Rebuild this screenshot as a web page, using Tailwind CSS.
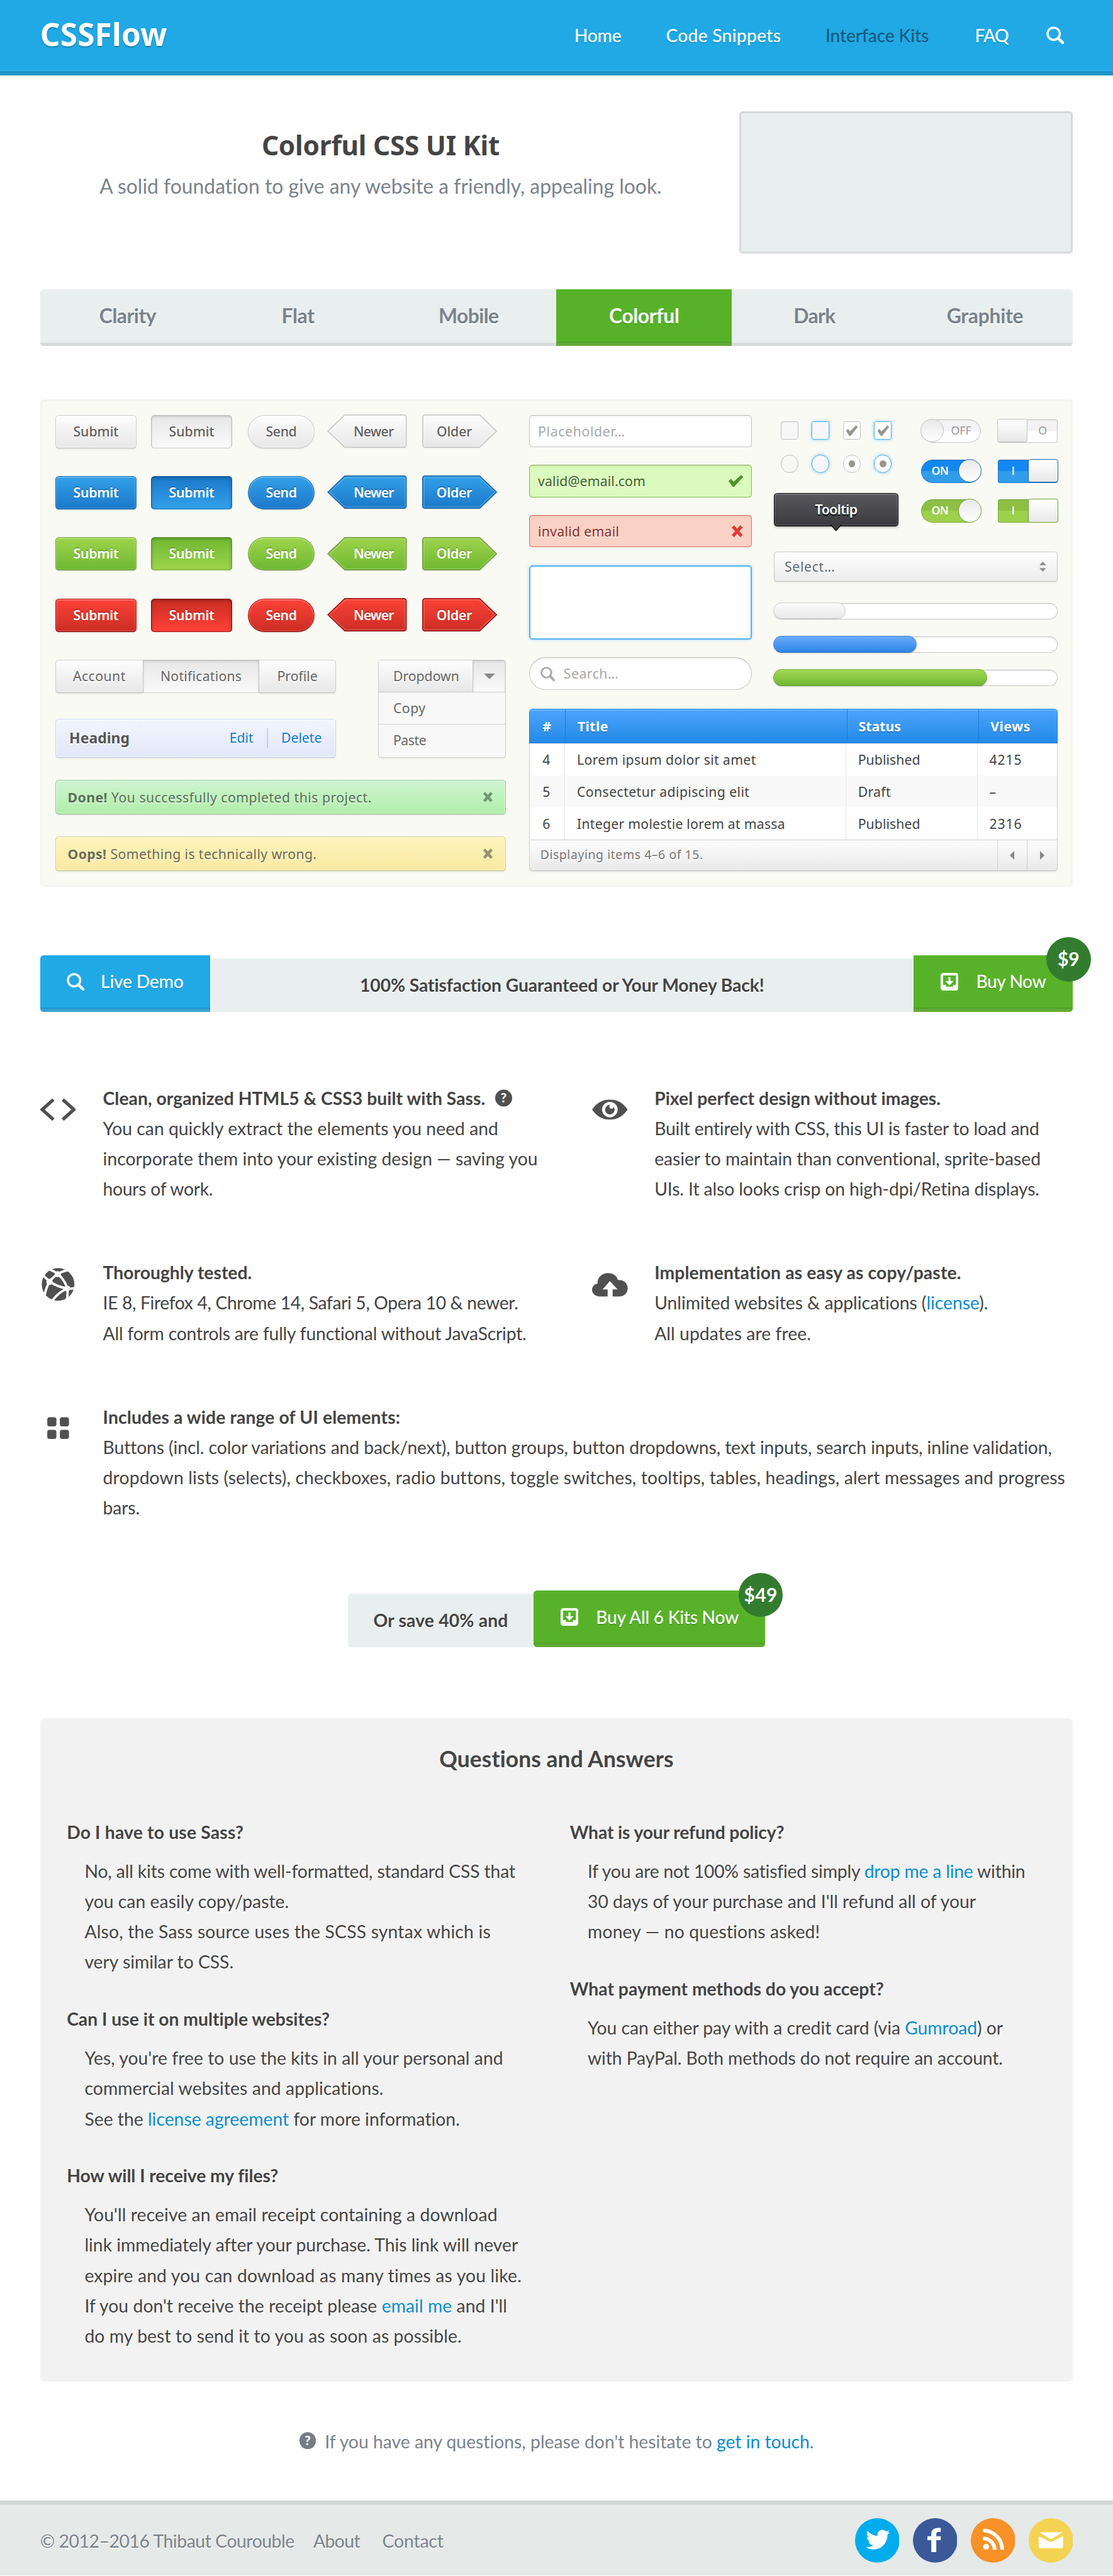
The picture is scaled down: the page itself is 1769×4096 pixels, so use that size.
<!DOCTYPE html>
<html lang="en">
<head>
<meta charset="utf-8">
<title>Colorful CSS UI Kit - CSSFlow</title>
<script src="https://cdn.jsdelivr.net/npm/@tailwindcss/browser@4"></script>
</head>
<body class="bg-white">
<svg class="absolute size-0">
  <defs>
    <linearGradient id="g-gray" x2="0" y2="1"><stop stop-color="#fdfdfd"/><stop offset="1" stop-color="#e7e7e7"/></linearGradient>
    <linearGradient id="g-blue" x2="0" y2="1"><stop stop-color="#33a0e9"/><stop offset="1" stop-color="#1b79ca"/></linearGradient>
    <linearGradient id="g-green" x2="0" y2="1"><stop stop-color="#9dd44b"/><stop offset="1" stop-color="#70b832"/></linearGradient>
    <linearGradient id="g-red" x2="0" y2="1"><stop stop-color="#fd4238"/><stop offset="1" stop-color="#cb2d24"/></linearGradient>
  </defs>
  <symbol id="newer" viewBox="0 0 72 32">
    <path d="M16 1.5H69a2 2 0 0 1 2 2V30.500H16z" fill="#000" stroke="none" opacity=".06"/>
    <path d="M15.800 .5H69a2 2 0 0 1 2 2V27.500a2 2 0 0 1-2 2H15.800L.7 15z"/>
    <path d="M16.300 1.500H69a1 1 0 0 1 1 1V27.500a1 1 0 0 1-1 1H16.300L2 15z" fill="none" stroke="#fff" opacity=".2"/>
  </symbol>
  <symbol id="older" viewBox="0 0 68 32">
    <path d="M1 1.500H52V30.500H1z" fill="#000" stroke="none" opacity=".06"/>
    <path d="M2.500 .5H51.700L66.800 15L51.700 29.500H2.500a2 2 0 0 1-2-2V2.500a2 2 0 0 1 2-2z"/>
    <path d="M2.500 1.500H51.200L65.500 15L51.200 28.500H2.500a1 1 0 0 1-1-1V2.500a1 1 0 0 1 1-1z" fill="none" stroke="#fff" opacity=".2"/>
  </symbol>
  <symbol id="cross" viewBox="0 0 10 10"><path d="M1.500 1L8.500 9M8.500 1L1.500 9" fill="none" stroke="currentColor" stroke-width="2.700"/></symbol>
  <symbol id="check" viewBox="0 0 14 11"><path d="M0.500 5.600L2.800 3.600L5 6.200L12 0.200L13.800 1.800L5.600 10.800L4.300 10.800Z" fill="currentColor"/></symbol>
  <symbol id="search" viewBox="0 0 16 16"><circle cx="6.600" cy="6.600" r="5.500" fill="none" stroke="currentColor" stroke-width="2"/><path d="M10.500 10.500L14.800 14.800" stroke="currentColor" stroke-width="2.600" stroke-linecap="round"/></symbol>
  <symbol id="download" viewBox="0 0 16 16"><rect x="1.100" y="1.100" width="13.800" height="13.800" rx="1.500" fill="none" stroke="currentColor" stroke-width="2.200"/><path d="M7.100 3.800H8.900V7.300H11.600L8 11.300L4.400 7.300H7.100z" fill="currentColor"/><path d="M2 10.800H4.800V12.500H11.200V10.800H14V14H2z" fill="currentColor"/></symbol>
</svg>

<div class="flex h-[2315px] w-[1000px] flex-col bg-white font-['Lato',sans-serif] text-[16px] leading-[27.2px] text-[#444] whitespace-nowrap [font-variant-ligatures:none] [zoom:1.769]">

  <header class="h-[69px] shrink-0 border-b border-[#f0f3f4]">
    <div class="flex h-[68px] items-start border-b-4 border-[#1a93cb] bg-[#20a9e5] px-9 text-white shadow-[inset_0_-1px_#30b0e9]">
      <div class="font-['Noto_Sans',sans-serif] text-[28px] leading-[62px] font-bold tracking-[.11px] [text-shadow:0_1px_1px_rgba(0,0,0,.25)]">CSSFlow</div>
      <nav class="ml-auto flex gap-10 leading-[64px] font-medium [text-shadow:0_1px_rgba(0,0,0,.12)]">
        <a class="tracking-[-.1px]">Home</a>
        <a class="tracking-[.13px]">Code Snippets</a>
        <a class="mr-[1.500px] tracking-[-.1px] text-[#135b7d] [text-shadow:none]">Interface Kits</a>
        <a class="tracking-[-.5px]">FAQ</a>
      </nav>
      <svg class="mt-6 mr-2 ml-[34px] size-4 shrink-0"><use href="#search"/></svg>
    </div>
  </header>

  <main class="shrink-0 px-9 pt-[31px]">
    <section class="flex">
      <div class="w-[612px] pt-3 text-center">
        <h1 class="font-['Noto_Sans',sans-serif] text-2xl leading-[37px] font-bold tracking-[-.16px]">Colorful CSS UI Kit</h1>
        <p class="mt-[5px] text-lg leading-7 tracking-[.01px] text-[#7a838b]">A solid foundation to give any website a friendly, appealing look.</p>
      </div>
      <div class="ml-4 h-32 w-[300px] rounded-[3px] border-2 border-[#d6dada] bg-[#e8efee]"></div>
    </section>

    <nav class="mt-8 flex h-[51px] overflow-hidden rounded-[3px] text-center text-lg leading-[48.500px] font-bold">
      <a class="w-[157.500px] border-b-3 border-[#d6dad9] bg-[#e8efee] tracking-[-.28px] text-[#7a838b] [text-shadow:0_1px_#fff]">Clarity</a>
      <a class="w-[148.500px] border-b-3 border-[#d6dad9] bg-[#e8efee] tracking-[-.18px] text-[#7a838b] [text-shadow:0_1px_#fff]">Flat</a>
      <a class="w-[158px] border-b-3 border-[#d6dad9] bg-[#e8efee] tracking-[-.32px] text-[#7a838b] [text-shadow:0_1px_#fff]">Mobile</a>
      <a class="w-[157.500px] border-b-3 border-[#62ab37] bg-[#58b229] tracking-[-.2px] text-white shadow-[inset_0_-1px_#4f9f2a] [text-shadow:0_1px_rgba(0,0,0,.15)]">Colorful</a>
      <a class="w-[148.500px] border-b-3 border-[#d6dad9] bg-[#e8efee] tracking-[-.33px] text-[#7a838b] [text-shadow:0_1px_#fff]">Dark</a>
      <a class="w-[158px] border-b-3 border-[#d6dad9] bg-[#e8efee] tracking-[-.13px] text-[#7a838b] [text-shadow:0_1px_#fff]">Graphite</a>
    </nav>

    <section class="mt-12 flex h-[438px] justify-between rounded-[3px] border-2 border-[#f4f5ee] bg-[#f9faf4] px-3 pt-[12.300px] pb-3 font-['Noto_Sans',sans-serif] text-xs text-[#666]">

      <!-- Buttons, groups, dropdown, alerts -->
      <div class="w-[405px]">
        <div class="flex h-[30px] text-center leading-[28px] font-medium text-[#616161] [text-shadow:0_1px_#fff]">
          <a class="w-[73px] rounded-[3px] border border-[#cfcfcf] border-b-[#c2c2c2] bg-linear-to-b from-[#fdfdfd] to-[#e7e7e7] shadow-[0_1px_1px_rgba(0,0,0,.07),inset_0_0_0_1px_rgba(255,255,255,.3)]">Submit</a>
          <a class="ml-[13px] w-[73px] rounded-[3px] border border-[#bdbdbd] border-b-[#d2d2d2] bg-linear-to-b from-[#e7e7e7] to-[#fafafa] shadow-[inset_0_1px_2px_rgba(0,0,0,.16)]">Submit</a>
          <a class="ml-[14px] w-[60px] rounded-full border border-[#cfcfcf] border-b-[#c2c2c2] bg-linear-to-b from-[#fdfdfd] to-[#e7e7e7] tracking-[-.19px] shadow-[0_1px_1px_rgba(0,0,0,.07),inset_0_0_0_1px_rgba(255,255,255,.3)]">Send</a>
          <a class="relative ml-3 w-[71px] border border-transparent pl-[11px] tracking-[-.32px]"><svg class="absolute -top-px -left-px h-8 w-[72px]" fill="url(#g-gray)" stroke="#c9c9c9"><use href="#newer"/></svg><span class="relative">Newer</span></a>
          <a class="relative ml-[14px] w-[67px] border border-transparent pr-[10px] tracking-[-.05px]"><svg class="absolute -top-px -left-px h-8 w-[68px]" fill="url(#g-gray)" stroke="#c9c9c9"><use href="#older"/></svg><span class="relative">Older</span></a>
        </div>
        <div class="mt-[25px] flex h-[30px] text-center leading-[28px] font-semibold tracking-[-.14px] text-white [text-shadow:0_-1px_rgba(0,0,0,.25)]">
          <a class="w-[73px] rounded-[3px] border border-[#1a74bd] border-b-[#12599a] bg-linear-to-b from-[#33a0e9] to-[#1b79ca] shadow-[0_1px_1px_rgba(0,0,0,.07),inset_0_0_0_1px_rgba(255,255,255,.1),inset_0_1px_rgba(255,255,255,.2)]">Submit</a>
          <a class="ml-[13px] w-[73px] rounded-[3px] border border-[#145a98] border-b-[#1f78c4] bg-linear-to-b from-[#1b79ca] to-[#33a0e9] shadow-[inset_0_1px_3px_rgba(0,0,0,.25)]">Submit</a>
          <a class="ml-[14px] w-[60px] rounded-full border border-[#1a74bd] border-b-[#12599a] bg-linear-to-b from-[#33a0e9] to-[#1b79ca] tracking-[-.27px] shadow-[0_1px_1px_rgba(0,0,0,.07),inset_0_0_0_1px_rgba(255,255,255,.1),inset_0_1px_rgba(255,255,255,.2)]">Send</a>
          <a class="relative ml-3 w-[71px] border border-transparent pl-[11px] tracking-[-.5px]"><svg class="absolute -top-px -left-px h-8 w-[72px]" fill="url(#g-blue)" stroke="#1767ac"><use href="#newer"/></svg><span class="relative">Newer</span></a>
          <a class="relative ml-[14px] w-[67px] border border-transparent pr-[10px]"><svg class="absolute -top-px -left-px h-8 w-[68px]" fill="url(#g-blue)" stroke="#1767ac"><use href="#older"/></svg><span class="relative">Older</span></a>
        </div>
        <div class="mt-[25px] flex h-[30px] text-center leading-[28px] font-semibold tracking-[-.14px] text-white [text-shadow:0_-1px_rgba(0,0,0,.2)]">
          <a class="w-[73px] rounded-[3px] border border-[#7aad41] border-b-[#668f38] bg-linear-to-b from-[#9dd44b] to-[#70b832] shadow-[0_1px_1px_rgba(0,0,0,.07),inset_0_0_0_1px_rgba(255,255,255,.1),inset_0_1px_rgba(255,255,255,.2)]">Submit</a>
          <a class="ml-[13px] w-[73px] rounded-[3px] border border-[#638f34] border-b-[#7eb246] bg-linear-to-b from-[#70b832] to-[#9dd44b] shadow-[inset_0_1px_3px_rgba(0,0,0,.25)]">Submit</a>
          <a class="ml-[14px] w-[60px] rounded-full border border-[#7aad41] border-b-[#668f38] bg-linear-to-b from-[#9dd44b] to-[#70b832] tracking-[-.27px] shadow-[0_1px_1px_rgba(0,0,0,.07),inset_0_0_0_1px_rgba(255,255,255,.1),inset_0_1px_rgba(255,255,255,.2)]">Send</a>
          <a class="relative ml-3 w-[71px] border border-transparent pl-[11px] tracking-[-.5px]"><svg class="absolute -top-px -left-px h-8 w-[72px]" fill="url(#g-green)" stroke="#709f3c"><use href="#newer"/></svg><span class="relative">Newer</span></a>
          <a class="relative ml-[14px] w-[67px] border border-transparent pr-[10px]"><svg class="absolute -top-px -left-px h-8 w-[68px]" fill="url(#g-green)" stroke="#709f3c"><use href="#older"/></svg><span class="relative">Older</span></a>
        </div>
        <div class="mt-[25px] flex h-[30px] text-center leading-[28px] font-semibold tracking-[-.14px] text-white [text-shadow:0_-1px_rgba(0,0,0,.25)]">
          <a class="w-[73px] rounded-[3px] border border-[#b01613] border-b-[#860e0b] bg-linear-to-b from-[#fd4238] to-[#cb2d24] shadow-[0_1px_1px_rgba(0,0,0,.07),inset_0_0_0_1px_rgba(255,255,255,.1),inset_0_1px_rgba(255,255,255,.2)]">Submit</a>
          <a class="ml-[13px] w-[73px] rounded-[3px] border border-[#7e0d0b] border-b-[#ad1a16] bg-linear-to-b from-[#cb2d24] to-[#fd4238] shadow-[inset_0_1px_3px_rgba(0,0,0,.3)]">Submit</a>
          <a class="ml-[14px] w-[60px] rounded-full border border-[#b01613] border-b-[#860e0b] bg-linear-to-b from-[#fd4238] to-[#cb2d24] tracking-[-.27px] shadow-[0_1px_1px_rgba(0,0,0,.07),inset_0_0_0_1px_rgba(255,255,255,.1),inset_0_1px_rgba(255,255,255,.2)]">Send</a>
          <a class="relative ml-3 w-[71px] border border-transparent pl-[11px] tracking-[-.5px]"><svg class="absolute -top-px -left-px h-8 w-[72px]" fill="url(#g-red)" stroke="#9c1210"><use href="#newer"/></svg><span class="relative">Newer</span></a>
          <a class="relative ml-[14px] w-[67px] border border-transparent pr-[10px]"><svg class="absolute -top-px -left-px h-8 w-[68px]" fill="url(#g-red)" stroke="#9c1210"><use href="#older"/></svg><span class="relative">Older</span></a>
        </div>

        <div class="mt-[25px] flex h-[88px] justify-between">
          <div class="w-[252px]">
            <div class="flex h-[30px] text-center leading-[28px] [text-shadow:0_1px_#fff]">
              <a class="w-[78.500px] rounded-l-[3px] border border-r-0 border-[#cfcfcf] border-b-[#c2c2c2] bg-linear-to-b from-[#fdfdfd] to-[#e7e7e7] tracking-[.26px] shadow-[0_1px_1px_rgba(0,0,0,.07)]">Account</a>
              <a class="w-[105px] border border-[#c6c6c6] border-t-[#bdbdbd] border-b-[#d2d2d2] bg-linear-to-b from-[#e7e7e7] to-[#fafafa] tracking-[.13px] shadow-[inset_0_1px_2px_rgba(0,0,0,.12)]">Notifications</a>
              <a class="w-[68.500px] rounded-r-[3px] border border-l-0 border-[#cfcfcf] border-b-[#c2c2c2] bg-linear-to-b from-[#fdfdfd] to-[#e7e7e7] shadow-[0_1px_1px_rgba(0,0,0,.07)]">Profile</a>
            </div>
            <div class="mt-[23px] flex h-[35px] items-center rounded-[3px] border border-[#d0d8f0] border-b-[#bccbeb] bg-linear-to-b from-[#f2f6fe] to-[#e2e6f8] pr-3 pl-[12px] leading-[32px] text-[#0c7ccb] shadow-[0_1px_1px_rgba(0,0,0,.06),inset_0_0_0_1px_rgba(255,255,255,.25)] [text-shadow:0_1px_#fff]">
              <b class="text-[13px] text-[#555]">Heading</b>
              <a class="ml-auto">Edit</a>
              <i class="mx-3 h-[18px] w-px bg-[#c3cdeb]"></i>
              <a>Delete</a>
            </div>
          </div>
          <div class="h-[88px] w-[115px] rounded-[3px] border border-[#cacaca] bg-[#f8f8f8] leading-[28px] shadow-[0_1px_1px_rgba(0,0,0,.06)] [text-shadow:0_1px_#fff]">
            <div class="flex h-[29px] border-b border-[#cacaca]">
              <a class="w-[85px] rounded-tl-[2px] border-r border-[#c6c6c6] bg-linear-to-b from-[#fdfdfd] to-[#e7e7e7] pl-[13px]">Dropdown</a>
              <a class="flex grow items-center justify-center bg-linear-to-b from-[#e7e7e7] to-[#fafafa] shadow-[inset_0_1px_2px_rgba(0,0,0,.14)]"><svg class="h-[5px] w-[10px]" viewBox="0 0 10 5"><path d="M0 0H10L5 5z" fill="#888"/></svg></a>
            </div>
            <a class="block h-[29px] border-b border-[#cfcfcf] pl-[13px] tracking-[.3px]">Copy</a>
            <a class="block pl-[13px] tracking-[-.25px]">Paste</a>
          </div>
        </div>

        <div class="mt-5 flex h-[31px] items-center justify-between rounded-[3px] border border-[#93cf98] border-b-[#86bb8b] bg-linear-to-b from-[#cef4d0] to-[#b1eeaa] pr-[11px] pl-[10.500px] leading-[30px] text-[#577056] shadow-[0_1px_1px_rgba(0,0,0,.06),inset_0_0_0_1px_rgba(255,255,255,.25)] [text-shadow:0_1px_rgba(255,255,255,.6)]">
          <span class="tracking-[.27px]"><b>Done!</b> You successfully completed this project.</span>
          <svg class="size-[9.500px] text-[#6f9770]"><use href="#cross"/></svg>
        </div>
        <div class="mt-5 flex h-[31px] items-center justify-between rounded-[3px] border border-[#d9ce88] border-b-[#c9bf7f] bg-linear-to-b from-[#fdf4bd] to-[#fae9a2] pr-[11px] pl-[10.500px] leading-[30px] text-[#6f6a53] shadow-[0_1px_1px_rgba(0,0,0,.06),inset_0_0_0_1px_rgba(255,255,255,.25)] [text-shadow:0_1px_rgba(255,255,255,.6)]">
          <span class="tracking-[.22px]"><b>Oops!</b> Something is technically wrong.</span>
          <svg class="size-[9.500px] text-[#949071]"><use href="#cross"/></svg>
        </div>
      </div>

      <div class="w-[475px]">
        <div class="flex h-[247px] justify-between">
          <!-- Inputs -->
          <div class="flex w-[200px] flex-col gap-4 leading-[28px]">
            <div class="h-[29px] rounded-[3px] border border-[#c6c6c6] border-t-[#b9b9b9] bg-white pl-[7.500px] tracking-[.36px] text-[#a9a9a9] shadow-[inset_0_1px_2px_rgba(0,0,0,.06)]">Placeholder…</div>
            <div class="flex h-[29px] items-center rounded-[3px] border border-[#8abb50] border-t-[#7fae49] bg-[#dbfabd] pr-[6.500px] pl-[7.500px] tracking-[.07px] text-[#3f6228] shadow-[inset_0_1px_2px_rgba(0,0,0,.08)] [text-shadow:0_1px_rgba(255,255,255,.6)]">valid@email.com<svg class="ml-auto h-[11px] w-[14px] text-[#4f922c]"><use href="#check"/></svg></div>
            <div class="flex h-[29px] items-center rounded-[3px] border border-[#e5735d] border-t-[#dd5f4b] bg-[#fad2c5] pr-[7px] pl-[7.500px] tracking-[.16px] text-[#88302a] shadow-[inset_0_1px_2px_rgba(0,0,0,.08)] [text-shadow:0_1px_rgba(255,255,255,.6)]">invalid email<svg class="ml-auto size-[11px] text-[#dd3c38]"><use href="#cross"/></svg></div>
            <div class="h-[67px] rounded-[3px] border-[1.500px] border-[#4fb1f5] bg-white shadow-[0_0_3px_rgba(79,177,245,.5)]"></div>
            <div class="flex h-[29px] items-center rounded-full border border-[#c6c6c6] border-t-[#b9b9b9] bg-white pl-[9.500px] text-[#a9a9a9] shadow-[inset_0_1px_2px_rgba(0,0,0,.06)]"><svg class="size-[13px]"><use href="#search"/></svg><span class="ml-2 tracking-[.29px]">Search…</span></div>
          </div>

          <!-- Checks, toggles, select, progress -->
          <div class="w-[255px]">
            <div class="flex h-[100px] justify-between">
              <div class="w-[112px] pt-1.5">
                <div class="flex gap-3 pl-1.5">
                  <i class="size-4 rounded-[2px] border border-[#bdbdbd] bg-[#f7f7f7]"></i>
                  <i class="size-4 rounded-[2px] border border-[#4fb1f5] bg-[#f7f7f9] shadow-[0_0_3px_rgba(79,177,245,.7)]"></i>
                  <i class="flex size-4 items-center justify-center rounded-[2px] border border-[#bdbdbd] bg-white text-[#989591]"><svg class="h-[10px] w-[11px]" viewBox="0 0 14 11" preserveAspectRatio="none"><use href="#check" width="14" height="11"/></svg></i>
                  <i class="flex size-4 items-center justify-center rounded-[2px] border border-[#4fb1f5] bg-white text-[#989591] shadow-[0_0_3px_rgba(79,177,245,.7)]"><svg class="h-[10px] w-[11px]" viewBox="0 0 14 11" preserveAspectRatio="none"><use href="#check" width="14" height="11"/></svg></i>
                </div>
                <div class="mt-3.5 flex gap-3 pl-1.5">
                  <i class="size-4 rounded-full border border-[#bdbdbd] bg-[#f7f7f7]"></i>
                  <i class="size-4 rounded-full border border-[#4fb1f5] bg-[#f7f7f9] shadow-[0_0_3px_rgba(79,177,245,.7)]"></i>
                  <i class="flex size-4 items-center justify-center rounded-full border border-[#bdbdbd] bg-white"><b class="size-1.5 rounded-full bg-[#989591]"></b></i>
                  <i class="flex size-4 items-center justify-center rounded-full border border-[#4fb1f5] bg-white shadow-[0_0_3px_rgba(79,177,245,.7)]"><b class="size-1.5 rounded-full bg-[#989591]"></b></i>
                </div>
                <div class="relative mt-[18px] h-[30px] rounded-[3px] border border-[#1a1a1c] border-b-black bg-linear-to-b from-[#59595e] to-[#3a3a3e] text-center leading-[28px] font-semibold tracking-[-.3px] text-white shadow-[0_1px_2px_rgba(0,0,0,.25),inset_0_0_0_1px_rgba(255,255,255,.08),inset_0_1px_rgba(255,255,255,.1)] [text-shadow:0_1px_#000]">Tooltip
                  <svg class="absolute top-[28px] left-[50px] h-[6px] w-[11px]" viewBox="0 0 11 6"><path d="M.5 0L5.500 5.500L10.500 0" fill="#3e3e42" stroke="#111" stroke-width=".8"/></svg>
                </div>
              </div>
              <div class="grid h-[97px] w-[123px] grid-cols-[54px_54px] gap-[15px] pt-1 text-[10px] leading-[19px]">
                <div class="flex h-[21px] items-start rounded-full border border-[#c4c4c4] border-t-[#b9b9b9] bg-[linear-gradient(#f3f3f5_50%,#fff_50%)] text-[#999]"><i class="-mt-px -ml-px size-[21px] rounded-full border border-[#c2c2c2] bg-linear-to-b from-[#e8e8e8] to-white"></i><span class="ml-[6.500px]">OFF</span></div>
                <div class="flex h-[21px] items-start rounded-[2px] border border-[#c4c4c4] border-t-[#b9b9b9] bg-[linear-gradient(#f3f3f5_50%,#fff_50%)] text-[#999]"><i class="-mt-px -ml-px h-[21px] w-[27px] rounded-[2px] border border-[#c2c2c2] bg-linear-to-b from-white to-[#e8e8e8]"></i><span class="ml-2.5">O</span></div>
                <div class="flex h-[21px] items-start justify-between rounded-full border border-[#1b76c4] border-t-[#1863a4] bg-[linear-gradient(#1488f2_50%,#319de9_50%)] pl-[9px] font-semibold text-white"><span class="tracking-[-.3px]">ON</span><i class="-mt-px -mr-px size-[21px] rounded-full border border-[#1a65a8] bg-linear-to-b from-[#e8e8e8] to-white"></i></div>
                <div class="flex h-[21px] items-start justify-between rounded-[2px] border border-[#1b76c4] border-t-[#1863a4] bg-[linear-gradient(#1488f2_50%,#319de9_50%)] pl-[12px] font-semibold text-white"><span class="font-['Lato',sans-serif]">I</span><i class="-mt-px -mr-px h-[21px] w-[27px] rounded-[2px] border border-[#1a65a8] bg-linear-to-b from-white to-[#e8e8e8]"></i></div>
                <div class="flex h-[21px] items-start justify-between rounded-full border border-[#7cab3d] border-t-[#6c9a37] bg-[linear-gradient(#8dbf43_50%,#9dd04b_50%)] pl-[9px] font-semibold text-white"><span class="tracking-[-.3px]">ON</span><i class="-mt-px -mr-px size-[21px] rounded-full border border-[#6f9d3a] bg-linear-to-b from-[#e8e8e8] to-white"></i></div>
                <div class="flex h-[21px] items-start justify-between rounded-[2px] border border-[#7cab3d] border-t-[#6c9a37] bg-[linear-gradient(#8dbf43_50%,#9dd04b_50%)] pl-[12px] font-semibold text-white"><span class="font-['Lato',sans-serif]">I</span><i class="-mt-px -mr-px h-[21px] w-[27px] rounded-[2px] border border-[#6f9d3a] bg-linear-to-b from-white to-[#e8e8e8]"></i></div>
              </div>
            </div>
            <div class="mt-[23px] flex h-[27px] items-center rounded-[3px] border border-[#cacaca] border-b-[#c0c0c0] bg-linear-to-b from-[#fdfdfd] to-[#ececec] pr-2.5 pl-[9px] leading-[25px] tracking-[.39px] text-[#606b74] shadow-[0_1px_1px_rgba(0,0,0,.06)] [text-shadow:0_1px_#fff]">Select…<svg class="ml-auto h-[9px] w-1.5" viewBox="0 0 6 9"><path d="M0 3.200L3 0L6 3.200zM0 5.800H6L3 9z" fill="#8c8c8c"/></svg></div>
            <div class="mt-[19px] h-[15px] rounded-full border border-[#c6c6c6] border-t-[#b9b9b9] bg-white"><div class="-mt-px -ml-px h-[15px] w-[65px] rounded-full border border-[#cdcdcd] bg-linear-to-b from-[#fcfcfc] to-[#e8e8e8] shadow-[0_1px_1px_rgba(0,0,0,.06)]"></div></div>
            <div class="mt-[15px] h-[15px] rounded-full border border-[#c6c6c6] border-t-[#b9b9b9] bg-white"><div class="-mt-px -ml-px h-[15px] w-[129px] rounded-full border border-[#4f86c8] border-b-[#3b6db0] bg-linear-to-b from-[#67acfc] to-[#2c84e6] shadow-[0_1px_1px_rgba(0,0,0,.1)]"></div></div>
            <div class="mt-[15px] h-[15px] rounded-full border border-[#c6c6c6] border-t-[#b9b9b9] bg-white"><div class="-mt-px -ml-px h-[15px] w-[192px] rounded-full border border-[#7cab3d] border-b-[#6c9a37] bg-linear-to-b from-[#a3d855] to-[#70b832] shadow-[0_1px_1px_rgba(0,0,0,.1)]"></div></div>
          </div>
        </div>

        <!-- Table -->
        <div class="mt-[17px] h-[146px] rounded-[3px] bg-white leading-[29px] text-[#444] shadow-[0_1px_1px_rgba(0,0,0,.06)]">
          <div class="grid h-[31px] grid-cols-[32.500px_253px_118px_71.500px] rounded-t-[3px] border border-[#1a7fdc] border-b-[#1670c4] bg-linear-to-b from-[#4ba5ff] to-[#1f8ae6] leading-[30px] font-bold text-white shadow-[inset_0_1px_rgba(255,255,255,.25)] [text-shadow:0_1px_rgba(0,0,0,.2)]">
            <span class="border-r border-[#1c7ed6] pl-[11.500px]">#</span>
            <span class="border-r border-[#1c7ed6] pl-[10.500px] tracking-[.23px]">Title</span>
            <span class="border-r border-[#1c7ed6] pl-[10px]">Status</span>
            <span class="pl-[10.500px] tracking-[.28px]">Views</span>
          </div>
          <div class="border-x border-[#cfcfcf]">
            <div class="grid h-[29px] grid-cols-[31.500px_253px_118px_70.500px]">
              <span class="border-r border-[#e6e6e6] pl-[11.500px]">4</span>
              <span class="border-r border-[#e6e6e6] pl-[11px] tracking-[.2px]">Lorem ipsum dolor sit amet</span>
              <span class="border-r border-[#e6e6e6] pl-[10.500px] tracking-[.05px]">Published</span>
              <span class="pl-[10.500px] tracking-[.51px]">4215</span>
            </div>
            <div class="grid h-[29px] grid-cols-[31.500px_253px_118px_70.500px] bg-[#f9f9f9]">
              <span class="border-r border-[#e6e6e6] pl-[11.500px]">5</span>
              <span class="border-r border-[#e6e6e6] pl-[11px] tracking-[.23px]">Consectetur adipiscing elit</span>
              <span class="border-r border-[#e6e6e6] pl-[10.500px] tracking-[.17px]">Draft</span>
              <span class="pl-[10.500px]">–</span>
            </div>
            <div class="grid h-[29px] grid-cols-[31.500px_253px_118px_70.500px]">
              <span class="border-r border-[#e6e6e6] pl-[11.500px]">6</span>
              <span class="border-r border-[#e6e6e6] pl-[11px] tracking-[.14px]">Integer molestie lorem at massa</span>
              <span class="border-r border-[#e6e6e6] pl-[10.500px] tracking-[.05px]">Published</span>
              <span class="pl-[10.500px] tracking-[.51px]">2316</span>
            </div>
          </div>
          <div class="flex h-[28px] rounded-b-[3px] border border-[#cfcfcf] border-b-[#c2c2c2] bg-linear-to-b from-[#fdfdfd] to-[#e9e9e9] pl-[9.500px] text-[11px] leading-[26px] text-[#777] [text-shadow:0_1px_#fff]">
            <span class="tracking-[.32px]">Displaying items 4–6 of 15.</span>
            <a class="ml-auto flex w-[27px] items-center justify-center border-l border-[#cfcfcf]"><svg class="h-2 w-1" viewBox="0 0 4 8"><path d="M4 0V8L0 4z" fill="#888"/></svg></a>
            <a class="flex w-[27px] items-center justify-center border-l border-[#cfcfcf]"><svg class="h-2 w-1" viewBox="0 0 4 8"><path d="M0 0V8L4 4z" fill="#888"/></svg></a>
          </div>
        </div>
      </div>
    </section>

    <section class="mt-[61.500px] flex h-[51px] items-end">
      <a class="flex h-[51px] w-[153px] rounded-l-[3px] border-b-3 border-[#3aa0d2] bg-[#20a9e5] pl-6 leading-[47px] font-medium tracking-[-.13px] text-white shadow-[inset_0_-1px_#1b97cf] [text-shadow:0_1px_rgba(0,0,0,.12)]"><svg class="mt-4 mr-[14.500px] size-4 shrink-0"><use href="#search"/></svg>Live Demo</a>
      <p class="h-12 grow bg-[#e8efee] text-center leading-[47.500px] font-bold tracking-[-.07px] [text-shadow:0_1px_#fff]">100% Satisfaction Guaranteed or Your Money Back!</p>
      <a class="relative flex h-[51px] w-[143px] rounded-r-[3px] border-b-3 border-[#62ab37] bg-[#58b229] pl-6 leading-[47px] font-medium tracking-[-.29px] text-white shadow-[inset_0_-1px_#4f9f2a] [text-shadow:0_1px_rgba(0,0,0,.15)]"><svg class="mt-4 mr-4 size-4 shrink-0"><use href="#download"/></svg>Buy Now<b class="absolute -top-4 -right-4 size-10 rounded-full bg-[#337c2f] text-center text-[17px] leading-[39px] font-bold tracking-[-.11px] [text-shadow:none]">$9</b></a>
    </section>

    <section class="mt-16 grid grid-cols-[496px_432px] gap-y-12">
      <div class="flex">
        <svg class="mt-2 mr-[24.500px] size-8 shrink-0" viewBox="0 0 32 32" fill="none" stroke="#505050" stroke-width="3"><path d="M11.800 7L1.800 16L11.800 25M20.200 7L30.200 16L20.200 25"/></svg>
        <p><b class="tracking-[.02px]">Clean, organized HTML5 &amp; CSS3 built with Sass.</b><i class="ml-[9px] inline-block size-[15px] -translate-y-[2px] rounded-full bg-[#505050] text-center align-baseline text-[12px] leading-[15px] font-black text-white not-italic">?</i><br>
        <span class="tracking-[.01px]">You can quickly extract the elements you need and</span><br>
        <span class="tracking-[.01px]">incorporate them into your existing design — saving you</span><br>
        <span class="tracking-[-.16px]">hours of work.</span></p>
      </div>
      <div class="flex">
        <svg class="mt-2 mr-6 size-8 shrink-0" viewBox="0 0 32 32"><path d="M0 16C5 8.500 11 7 16 7s11 1.500 16 9c-5 7.500-11 9-16 9S5 23.500 0 16z" fill="#505050"/><circle cx="16" cy="16" r="7" fill="#fff"/><circle cx="16" cy="16" r="4.300" fill="#505050"/><circle cx="17.500" cy="13.300" r="1.900" fill="#fff"/></svg>
        <p><b class="tracking-[.02px]">Pixel perfect design without images.</b><br>
        <span class="tracking-[-.1px]">Built entirely with CSS, this UI is faster to load and</span><br>
        <span class="tracking-[-.03px]">easier to maintain than conventional, sprite-based</span><br>
        <span class="tracking-[-.07px]">UIs. It also looks crisp on high-dpi/Retina displays.</span></p>
      </div>
      <div class="flex">
        <svg class="mt-2 mr-[24.500px] size-8 shrink-0" viewBox="36 28 192 192"><circle cx="132" cy="124" r="88" fill="#505050"/><g fill="none" stroke="#fff" stroke-width="13"><path d="M76 38Q105 50 130 66Q160 52 200 44M130 66Q106 84 86 108Q70 95 50 72M86 108Q68 140 60 180M86 108Q130 138 182 146Q168 100 130 66M182 146Q205 150 228 142M182 146Q135 165 98 215M182 146Q186 180 178 215"/></g><g fill="#fff"><circle cx="131" cy="69" r="16"/><circle cx="86" cy="110" r="17"/><circle cx="182" cy="146" r="16"/></g></svg>
        <p><b>Thoroughly tested.</b><br>
        <span class="tracking-[-.21px]">IE 8, Firefox 4, Chrome 14, Safari 5, Opera 10 &amp; newer.</span><br>
        <span class="tracking-[-.12px]">All form controls are fully functional without JavaScript.</span></p>
      </div>
      <div class="flex">
        <svg class="mt-2 mr-6 size-8 shrink-0" viewBox="0 0 32 32"><path d="M7 26.800C3 26.800 0 24.300 0 20.800c0-2.800 2-5 5-5.600C4.500 9.800 9 5.800 14.500 5.800c4.500 0 7.700 2.600 8.700 6.200C28.500 11.500 32 15 32 19.300c0 4.200-3 7.500-7.500 7.500H18.500V20.500H23L16 13L9.500 20.500H14V26.800z" fill="#505050"/></svg>
        <p><b class="tracking-[.07px]">Implementation as easy as copy/paste.</b><br>
        <span class="tracking-[-.02px]">Unlimited websites &amp; applications (<a class="text-[#0a8ccf]">license</a>).</span><br>
        <span class="tracking-[.03px]">All updates are free.</span></p>
      </div>
      <div class="col-span-2 flex">
        <svg class="mt-2 mr-[24.500px] size-8 shrink-0" viewBox="0 0 32 32" fill="#505050"><rect x="6.300" y="6" width="8.200" height="8.200" rx="2"/><rect x="17.600" y="6" width="8.200" height="8.200" rx="2"/><rect x="6.300" y="17.300" width="8.200" height="8.200" rx="2"/><rect x="17.600" y="17.300" width="8.200" height="8.200" rx="2"/></svg>
        <p><b class="tracking-[.07px]">Includes a wide range of UI elements:</b><br>
        <span class="tracking-[-.06px]">Buttons (incl. color variations and back/next), button groups, button dropdowns, text inputs, search inputs, inline validation,</span><br>
        <span class="tracking-[.08px]">dropdown lists (selects), checkboxes, radio buttons, toggle switches, tooltips, tables, headings, alert messages and progress</span><br>
        <span class="tracking-[-.08px]">bars.</span></p>
      </div>
    </section>

    <section class="mt-[61px] flex h-[51px] items-end justify-center">
      <p class="h-12 w-[167px] rounded-l-[3px] bg-[#e8efee] text-center leading-[47.500px] font-bold tracking-[.09px] [text-shadow:0_1px_#fff]">Or save 40% and</p>
      <a class="relative flex h-[51px] w-[208px] rounded-[3px] border-b-3 border-[#62ab37] bg-[#58b229] pl-6 leading-[47.500px] font-medium tracking-[-.18px] text-white shadow-[inset_0_-1px_#4f9f2a] [text-shadow:0_1px_rgba(0,0,0,.15)]"><svg class="mt-4 mr-4 size-4 shrink-0"><use href="#download"/></svg>Buy All 6 Kits Now<b class="absolute -top-4 -right-4 size-10 rounded-full bg-[#337c2f] text-center text-[17px] leading-[39px] font-bold tracking-[.14px] [text-shadow:none]">$49</b></a>
    </section>

    <section class="mt-16 h-[596px] rounded-[4px] bg-[#f2f2f2] px-6 [text-shadow:0_1px_#fff]">
      <h2 class="pt-[21px] text-center text-xl leading-[30px] font-bold tracking-[.05px]">Questions and Answers</h2>
      <div class="grid grid-cols-[452px_428px] pt-[37.500px]">
        <dl>
          <dt class="font-bold tracking-[.1px]">Do I have to use Sass?</dt>
          <dd class="mt-2 pl-4"><span class="tracking-[-.08px]">No, all kits come with well-formatted, standard CSS that</span><br><span class="tracking-[.02px]">you can easily copy/paste.</span><br><span class="tracking-[.1px]">Also, the Sass source uses the SCSS syntax which is</span><br><span class="tracking-[-.01px]">very similar to CSS.</span></dd>
          <dt class="mt-6 font-bold">Can I use it on multiple websites?</dt>
          <dd class="mt-2 pl-4"><span class="tracking-[.02px]">Yes, you're free to use the kits in all your personal and</span><br><span class="tracking-[.05px]">commercial websites and applications.</span><br>See the <a class="text-[#0a8ccf]">license agreement</a> for more information.</dd>
          <dt class="mt-6 font-bold tracking-[-.04px]">How will I receive my files?</dt>
          <dd class="mt-2 pl-4"><span class="tracking-[.05px]">You'll receive an email receipt containing a download</span><br><span class="tracking-[-.01px]">link immediately after your purchase. This link will never</span><br><span class="tracking-[.09px]">expire and you can download as many times as you like.</span><br><span class="tracking-[.03px]">If you don't receive the receipt please <a class="text-[#0a8ccf]">email me</a> and I'll</span><br><span class="tracking-[.05px]">do my best to send it to you as soon as possible.</span></dd>
        </dl>
        <dl>
          <dt class="font-bold tracking-[-.08px]">What is your refund policy?</dt>
          <dd class="mt-2 pl-4"><span class="tracking-[-.11px]">If you are not 100% satisfied simply <a class="text-[#0a8ccf]">drop me a line</a> within</span><br><span class="tracking-[.01px]">30 days of your purchase and I'll refund all of your</span><br><span class="tracking-[.09px]">money — no questions asked!</span></dd>
          <dt class="mt-6 font-bold tracking-[.01px]">What payment methods do you accept?</dt>
          <dd class="mt-2 pl-4"><span class="tracking-[-.02px]">You can either pay with a credit card (via <a class="text-[#0a8ccf]">Gumroad</a>) or</span><br><span class="tracking-[-.06px]">with PayPal. Both methods do not require an account.</span></dd>
        </dl>
      </div>
    </section>

    <p class="mt-[40.500px] flex items-center justify-center text-[#7a838b]"><i class="mr-2 inline-block size-[15px] -translate-y-px rounded-full bg-[#747d85] text-center text-[12px] leading-[15px] font-black text-white not-italic">?</i><span>If you have any questions, please don't hesitate to <a class="text-[#0a8ccf]">get in touch</a>.</span></p>
  </main>

  <footer class="mt-auto flex h-[67.500px] shrink-0 border-t-4 border-[#d3d8d4] bg-[#e5e9e7] px-9 leading-[65px] text-[#7a838b] [text-shadow:0_1px_#fff]">
    <span class="tracking-[-.24px]">© 2012–2016 Thibaut Courouble</span>
    <a class="ml-[17px] tracking-[-.3px]">About</a>
    <a class="ml-5 tracking-[-.07px]">Contact</a>
    <div class="mt-3 ml-auto flex gap-3">
      <svg class="size-10" viewBox="0 0 40 40"><circle cx="20" cy="20" r="20" fill="#00aced"/><path transform="translate(9.700 8.500) scale(.9)" fill="#fff" d="M23.954 4.569c-.885.389-1.830.654-2.825.775 1.014-.611 1.794-1.574 2.163-2.723-.951.555-2.005.959-3.127 1.184-.896-.959-2.173-1.559-3.591-1.559-2.717 0-4.920 2.203-4.920 4.917 0 .39.045.765.127 1.124C7.691 8.094 4.066 6.130 1.640 3.161c-.427.722-.666 1.561-.666 2.475 0 1.710.870 3.213 2.188 4.096-.807-.026-1.566-.248-2.228-.616v.061c0 2.385 1.693 4.374 3.946 4.827-.413.111-.849.171-1.296.171-.314 0-.615-.030-.916-.086.631 1.953 2.445 3.377 4.604 3.417-1.680 1.319-3.809 2.105-6.102 2.105-.390 0-.779-.023-1.170-.067 2.189 1.394 4.768 2.209 7.557 2.209 9.054 0 13.999-7.496 13.999-13.986 0-.209 0-.420-.015-.630.961-.689 1.800-1.560 2.460-2.548z"/></svg>
      <svg class="size-10" viewBox="0 0 40 40"><circle cx="20" cy="20" r="20" fill="#3b5998"/><path fill="#fff" d="M25 8.800H22.500C18.700 8.800 16.500 10.800 16.500 14.300V16.300H13V19.800H16.500V30.500H21V19.800H25V16.300H21V14.200C21 13 21.600 12.500 22.800 12.500H25z"/></svg>
      <svg class="size-10" viewBox="0 0 40 40"><circle cx="20" cy="20" r="20" fill="#f89126"/><circle cx="13.700" cy="25.700" r="2.700" fill="#fff"/><path fill="none" stroke="#fff" stroke-width="3.400" d="M11 18.200A10.300 10.300 0 0 1 21.400 28.400M11 11.200A17.200 17.200 0 0 1 28.200 28.400"/></svg>
      <svg class="size-10" viewBox="0 0 40 40"><circle cx="20" cy="20" r="20" fill="#f4d352"/><path fill="#fff" d="M9.300 12.700H30.700L20 19z M9 16.300L20 21.600L30.900 16.300V26a1 1 0 0 1-1 1H10a1 1 0 0 1-1-1z"/></svg>
    </div>
  </footer>
</div>
</body>
</html>
